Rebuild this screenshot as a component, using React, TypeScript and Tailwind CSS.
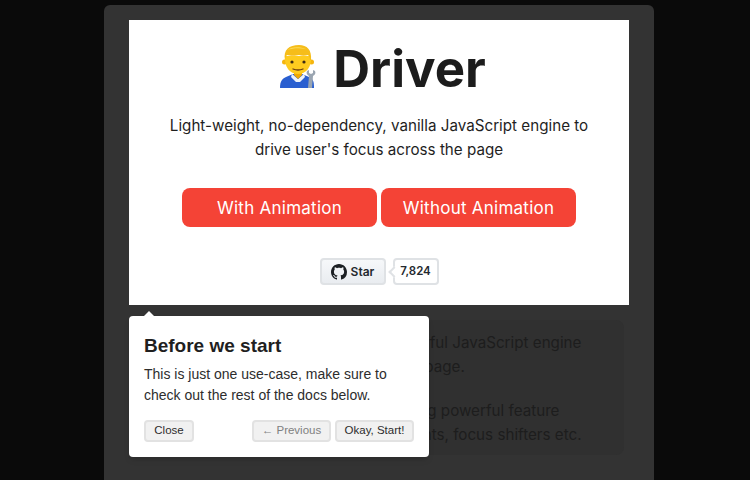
const inter = "font-['Inter',sans-serif]"
const arial = "font-['Liberation_Sans',Arial,sans-serif]"

function MechanicEmoji() {
  return (
    <svg width="37" height="43" viewBox="0 0 37 43" className="mb-[6px] shrink-0">
      <path d="M0 43c0-7 2-9 6-11l7-3h9l7 3c4 2 5 4 5 11z" fill="#2a5fd0" />
      <path d="M12 29l6 5 6-5 1 3-5 5h-4l-5-5z" fill="#eef3fa" />
      <path d="M14 25h8v5l-4 4-4-4z" fill="#f2a900" />
      <circle cx="4.500" cy="17" r="2.500" fill="#f5b50f" />
      <circle cx="31.500" cy="17" r="2.500" fill="#f5b50f" />
      <path d="M5 11c-1 11 5 18 13 18s14-7 13-18z" fill="#fecb1f" />
      <path d="M5 15C3 5 9 0 19 0c8 0 13 5 12 15l-1 0c0-2-1-4-2-5-3 1-6 1-9 0-3 1-9 1-12 0-1 1-2 3-2 5z" fill="#f6bd1a" />
      <path d="M7 5c4-3 12-4 19-1-6-1-13-1-19 1z" fill="#fbdc5c" />
      <circle cx="12" cy="17" r="1.600" fill="#3d2a14" />
      <circle cx="24" cy="17" r="1.600" fill="#3d2a14" />
      <path d="M13 24c3 1.200 7 1.200 10 0" stroke="#6b3d10" strokeWidth="1.300" fill="none" strokeLinecap="round" />
      <path d="M28 43l1-12c-2-1-3-3-2-5l2-1 0 3 2 1 2-1 0-3 2 1c1 2 0 4-2 5l-1 12z" fill="#9aa5b1" />
    </svg>
  )
}

export default function App() {
  return (
    <div className={`relative h-[480px] w-[750px] overflow-hidden bg-[#0a0a0a] ${inter}`}>

      {/* dimmed page */}
      <div className="ml-[104px] mt-[5px] h-[480px] w-[550px] rounded-t-md bg-[#333333] px-[25px] pt-[15px]">

        {/* hero */}
        <div className="flex h-[285px] w-[500px] flex-col items-center bg-white pt-[14px]">
          <div className="flex items-center gap-4 pl-2">
            <MechanicEmoji />
            <h1 className="text-[51px] font-bold leading-[70px] text-[#1c1c1c]">Driver</h1>
          </div>
          <p className="mt-[10px] w-[460px] text-center text-[15.2px] leading-6 text-[#1f1f1f]">
            Light-weight, no-dependency, vanilla JavaScript engine to<br />drive user's focus across the page
          </p>
          <div className="mt-[26px] flex gap-1">
            <button className="h-[39px] w-[195px] rounded-lg bg-[#f44336] pt-[2px] text-[17px] tracking-[0.25px] text-white">With Animation</button>
            <button className="h-[39px] w-[195px] rounded-lg bg-[#f44336] pt-[2px] text-[17px] tracking-[0.25px] text-white">Without Animation</button>
          </div>
          <div className="mt-[31px] flex items-center gap-[7px] text-xs font-semibold text-[#24292e]">
            <div className="flex h-[27px] w-[66px] items-center justify-center gap-1 rounded border-2 border-[#dfe2e5] bg-gradient-to-b from-[#f6f8fa] to-[#e9ecf0]">
              <svg width="16" height="16" viewBox="0 0 16 16" fill="#1b1f23">
                <path d="M8 0C3.580 0 0 3.580 0 8c0 3.540 2.290 6.530 5.470 7.590.4.07.55-.17.55-.38 0-.19-.01-.82-.01-1.490-2.010.37-2.530-.49-2.690-.94-.09-.23-.48-.94-.82-1.130-.28-.15-.68-.52-.01-.53.63-.01 1.080.58 1.230.82.72 1.210 1.870.87 2.330.66.07-.52.28-.87.51-1.070-1.780-.2-3.640-.89-3.640-3.950 0-.87.31-1.590.82-2.150-.08-.2-.36-1.020.08-2.120 0 0 .67-.21 2.200.82.64-.18 1.320-.27 2-.27.68 0 1.360.09 2 .27 1.530-1.040 2.200-.82 2.200-.82.44 1.100.16 1.920.08 2.120.51.56.82 1.270.82 2.150 0 3.070-1.870 3.750-3.650 3.950.29.25.54.73.54 1.480 0 1.070-.01 1.930-.01 2.200 0 .21.15.46.55.38A8.013 8.013 0 0016 8c0-4.420-3.580-8-8-8z" />
              </svg>
              Star
            </div>
            <div className="relative flex h-[27px] w-[46px] items-center justify-center rounded border-2 border-[#dfe2e5] bg-white text-[11.5px]">
              <span className="absolute -left-[5px] top-[8px] h-2 w-2 rotate-45 border-b-2 border-l-2 border-[#dfe2e5] bg-white" />
              7,824
            </div>
          </div>
        </div>

        {/* page text behind the overlay */}
        <div className="mt-[15px] h-[135px] w-[495px] rounded-lg bg-[#303030] pl-[65px] pt-[11px] text-[15.2px] leading-6 text-[#1d1d1d]">
          <p className="whitespace-nowrap">Driver is a lightweight and powerful JavaScript engine<br />to drive user's focus across the page.</p>
          <p className="mt-5 whitespace-nowrap">It offers rich set of APIs, including powerful feature<br />introductions, highlights, spotlights, focus shifters etc.</p>
        </div>
      </div>

      {/* popover */}
      <div className={`absolute left-[129px] top-[316px] h-[141px] w-[300px] rounded bg-white px-[15px] pt-[18px] shadow-md ${arial}`}>
        <span className="absolute -top-[5px] left-[15px] h-0 w-0 border-x-[5px] border-b-[5px] border-x-transparent border-b-white" />
        <h2 className="text-[19px] font-bold leading-[24px] text-[#1f1f1f]">Before we start</h2>
        <p className="mt-[6px] text-sm leading-[21px] text-[#2d2d2d]">
          This is just one use-case, make sure to check out the rest of the docs below.
        </p>
        <div className="mt-[14px] flex items-center text-[11.5px] text-[#2d2d2d]">
          <button className="h-[22px] w-[50px] rounded-sm border-2 border-[#e2e2e2] bg-[#f1f1f1]">Close</button>
          <button className="ml-auto h-[22px] w-[79px] rounded-sm border-2 border-[#e2e2e2] bg-[#f1f1f1] text-[#808080]">← Previous</button>
          <button className="ml-1 h-[22px] w-[79px] rounded-sm border-2 border-[#e2e2e2] bg-[#f1f1f1]">Okay, Start!</button>
        </div>
      </div>
    </div>
  )
}
